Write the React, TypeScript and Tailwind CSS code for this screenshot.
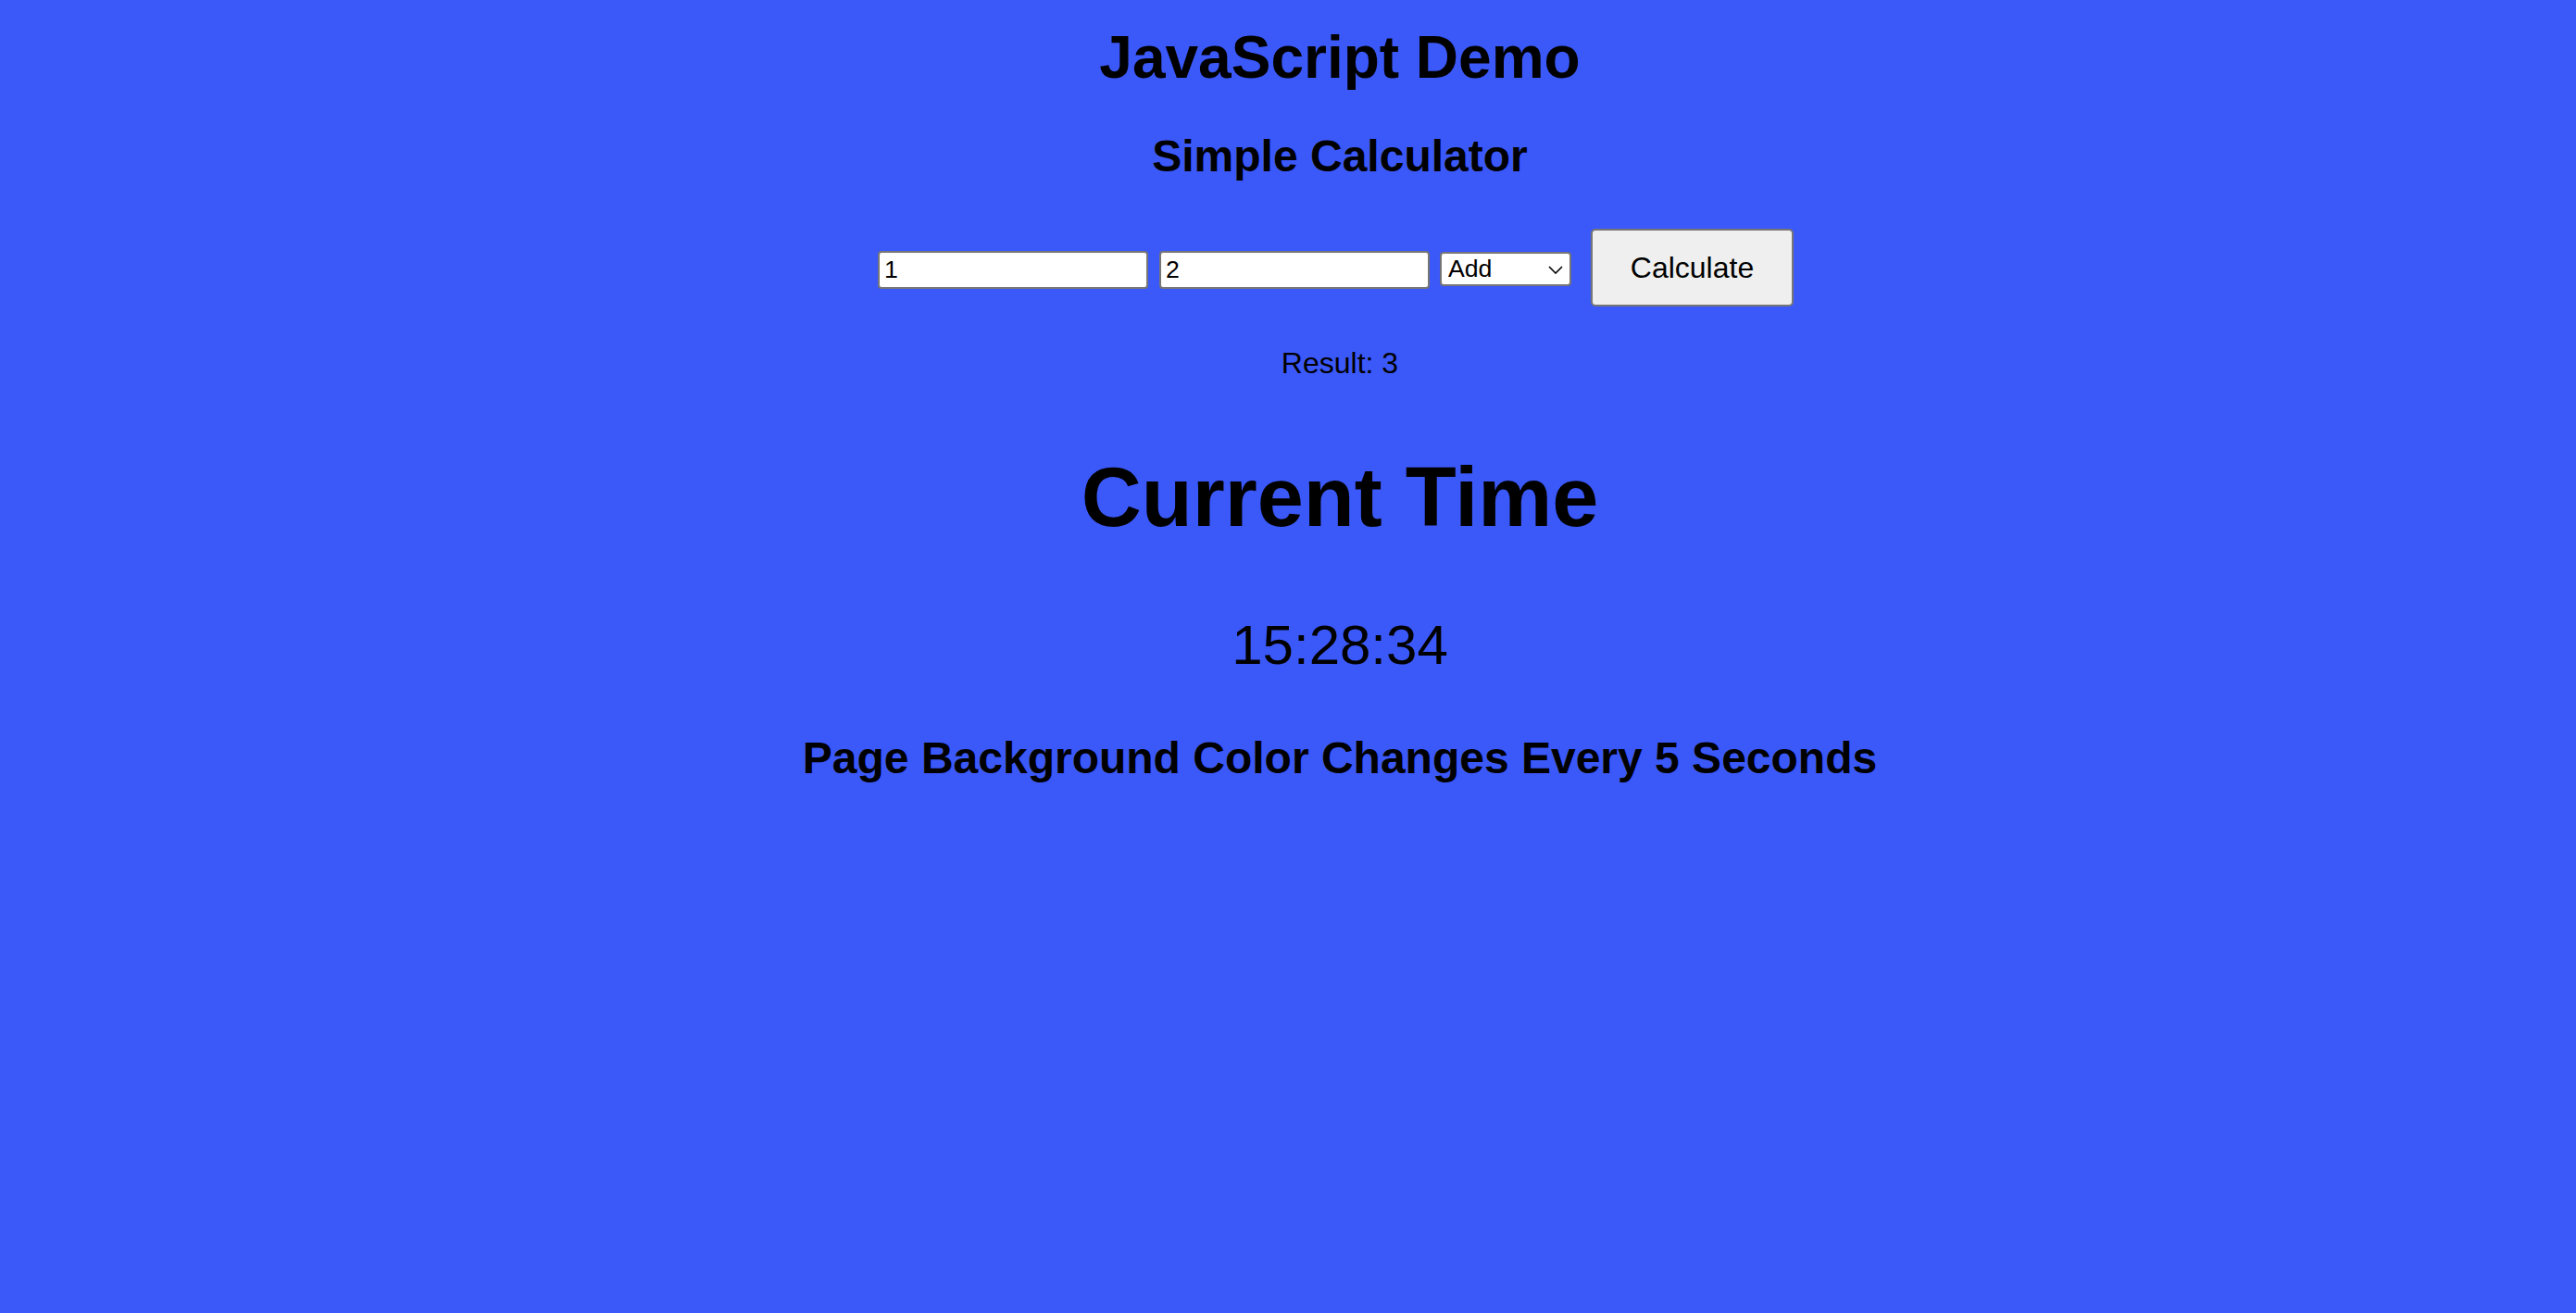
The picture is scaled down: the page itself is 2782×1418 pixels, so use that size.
import { useState } from "react";

type Op = "add" | "subtract" | "multiply" | "divide";

function compute(a: string, b: string, op: Op): string {
  const x = parseFloat(a);
  const y = parseFloat(b);
  if (isNaN(x) || isNaN(y)) return "Invalid input";
  if (op === "add") return String(x + y);
  if (op === "subtract") return String(x - y);
  if (op === "multiply") return String(x * y);
  if (y === 0) return "Cannot divide by zero";
  return String(x / y);
}

function Calculator() {
  const [a, setA] = useState("1");
  const [b, setB] = useState("2");
  const [op, setOp] = useState<Op>("add");
  const [result, setResult] = useState("3");

  return (
    <>
      {/* Inputs + operator + button */}
      <div className="mt-[54px] flex items-start pr-[9px]">
        <input
          type="text"
          value={a}
          onChange={(e) => setA(e.target.value)}
          className="mt-[24px] w-[292px] h-[41px] px-[5px] bg-white border-2 border-[#767676] rounded-[4px] text-[26.67px] text-black outline-none"
        />
        <input
          type="text"
          value={b}
          onChange={(e) => setB(e.target.value)}
          className="mt-[24px] ml-[12px] w-[292px] h-[41px] px-[5px] bg-white border-2 border-[#767676] rounded-[4px] text-[26.67px] text-black outline-none"
        />
        <div className="relative mt-[25px] ml-[11px] w-[142px] h-[37px]">
          <select
            value={op}
            onChange={(e) => setOp(e.target.value as Op)}
            className="appearance-none w-full h-full pl-[7px] bg-white border-2 border-[#767676] rounded-[4px] text-[26.67px] leading-none text-black outline-none"
          >
            <option value="add">Add</option>
            <option value="subtract">Subtract</option>
            <option value="multiply">Multiply</option>
            <option value="divide">Divide</option>
          </select>
          <svg
            className="absolute right-[9px] top-[15px] pointer-events-none"
            width="16"
            height="9"
            viewBox="0 0 16 9"
            fill="none"
          >
            <path d="M1 1l7 7 7-7" stroke="#000" strokeWidth="1.6" />
          </svg>
        </div>
        <button
          onClick={() => setResult(compute(a, b, op))}
          className="ml-[21px] w-[219px] h-[84px] bg-[#efefef] border-2 border-[#767676] rounded-[5px] text-[32px] leading-none text-black"
        >
          Calculate
        </button>
      </div>

      <p className="mt-[45px] text-[32px] leading-none">Result: {result}</p>
    </>
  );
}

export default function App() {
  return (
    <div className="min-h-screen w-full bg-[#3b58f9] text-black font-['Liberation_Sans',Arial,sans-serif]">
      <div className="flex flex-col items-center pl-[112px] pb-10">
        <h1 className="mt-[30px] text-[64px] font-bold leading-none">JavaScript Demo</h1>
        <h2 className="mt-[51px] text-[48px] font-bold leading-none">Simple Calculator</h2>

        <Calculator />

        <h1 className="mt-[84px] text-[90px] font-bold leading-none">Current Time</h1>
        <div className="mt-[85px] text-[60px] leading-none">15:28:34</div>

        <h2 className="mt-[68px] text-[48px] font-bold leading-none">
          Page Background Color Changes Every 5 Seconds
        </h2>
      </div>
    </div>
  );
}
